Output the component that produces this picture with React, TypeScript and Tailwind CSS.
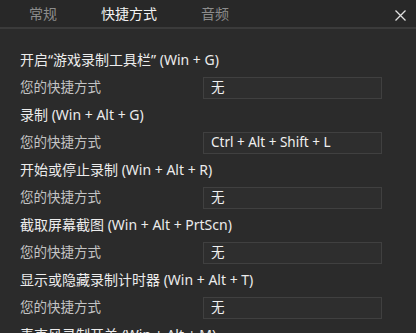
const rows = [
  { title: '开启“游戏录制工具栏” (Win + G)', value: '无' },
  { title: '录制 (Win + Alt + G)', value: 'Ctrl + Alt + Shift + L' },
  { title: '开始或停止录制 (Win + Alt + R)', value: '无' },
  { title: '截取屏幕截图 (Win + Alt + PrtScn)', value: '无' },
  { title: '显示或隐藏录制计时器 (Win + Alt + T)', value: '无' },
  { title: '麦克风录制开关 (Win + Alt + M)', value: '无' },
];

export default function App() {
  return (
    <div
      className="w-[416px] h-[333px] overflow-hidden bg-[#2b2b2b] text-[13px]"
      style={{ fontFamily: '"Segoe UI", "Noto Sans", "Noto Sans CJK SC", sans-serif' }}
    >
      <div className="h-[29px] flex items-center bg-[#282828] border-b-2 border-[#3b3b3b] relative">
        <div className="w-[86px] text-center text-[14px] text-[#8c8c8c]">常规</div>
        <div className="w-[86px] text-center text-[14px] text-[#f2f2f2]">快捷方式</div>
        <div className="w-[86px] text-center text-[14px] text-[#8c8c8c]">音频</div>
        <svg className="absolute right-[9px] top-[9px]" width="13" height="13" viewBox="0 0 13 13">
          <path d="M1.5 1.5 L11.5 11.5 M11.5 1.5 L1.5 11.5" stroke="#e0e0e0" strokeWidth="1.3" />
        </svg>
      </div>
      <div className="pl-[20px] pr-[34px] pt-[20px] flex flex-col">
        {rows.map((r, i) => (
          <div key={i} className="flex flex-col">
            <div className="h-[22px] flex items-center text-[14px] text-[#ececec] leading-none">{r.title}</div>
            <div className="h-[33px] flex items-center justify-between">
              <span className="text-[13.5px] text-[#c4c4c4] leading-none">您的快捷方式</span>
              <div className="w-[179px] h-[22px] border border-[#404040] bg-[#2e2e2e] flex items-center pl-[7px] text-[13.5px] text-[#f0f0f0] leading-none">
                {r.value}
              </div>
            </div>
          </div>
        ))}
      </div>
    </div>
  );
}
